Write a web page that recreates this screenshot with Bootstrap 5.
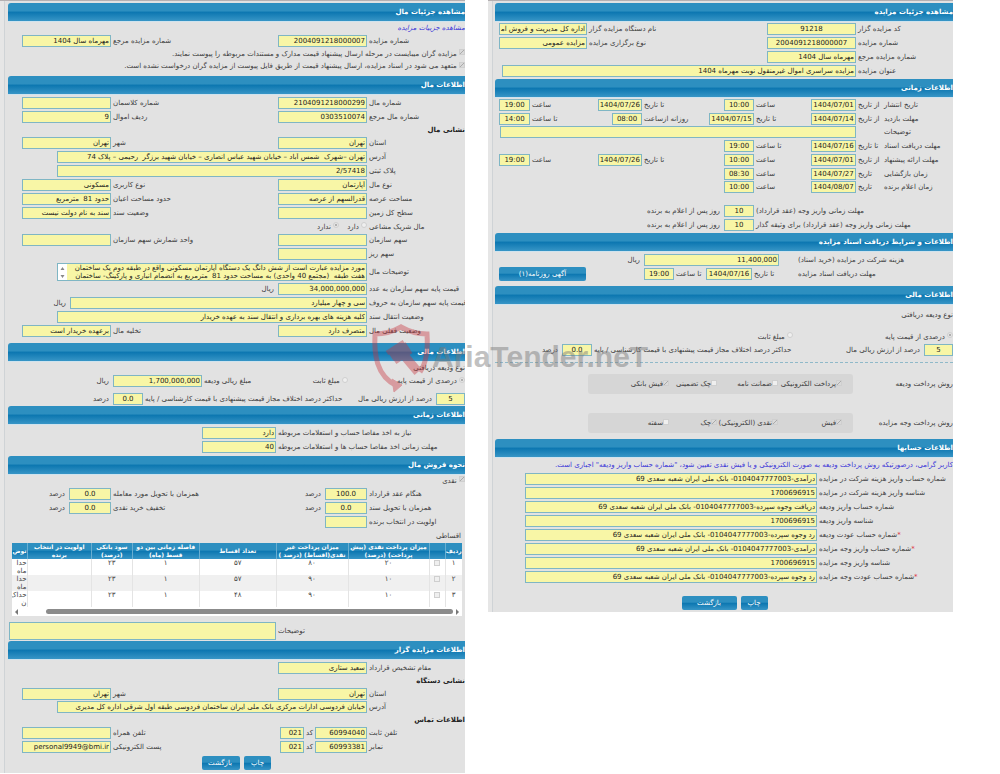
<!DOCTYPE html>
<html lang="fa">
<head>
<meta charset="utf-8">
<meta name="viewport" content="width=device-width, initial-scale=1">
<title>مشاهده جزئیات مزایده</title>
<link href="https://cdn.jsdelivr.net/npm/bootstrap@5.3.0/dist/css/bootstrap.min.css" rel="stylesheet">
<style>
  body { background: #fff; color: #3c3c3c; font: 7px/12px "DejaVu Sans", sans-serif; }
  .sheet { display: grid; grid-template-columns: 465fr 23fr 465fr 47fr; align-items: start; }
  .sheet > * { min-width: 0; }
  .pane { direction: rtl; overflow: hidden; border-top: 1px solid #b4b0b2; padding: 2px 0 1px;
    background: linear-gradient(90deg, #e6e6e6 4px, #cfd3d6 4px, #cfd3d6 5px, #e2e2e2 5px); }
  .pane.second { grid-column: 3; }
  .bar { height: 18px; margin: 0 0 0 8px; padding: 0; border-radius: 3px 0 0 0; color: #fff;
    font-size: 7px; font-weight: 700; line-height: 18px; box-shadow: 0 1px #cfe3ee;
    background: linear-gradient(#2d8fc0 0 45%, #0b76b0 50%, #3795c6); }
  .second .bar { margin-left: 7px; }
  .pad-a { padding: 1px 0; }
  .pad-b { padding: 2px 0; }
  .pad-c { padding: 2px 0 5px; }
  .ln { display: grid; align-items: center; height: 14px; white-space: nowrap; }
  .ln > * { min-width: 0; }
  .ln-13 { height: 13px; } .ln-12 { height: 12px; } .ln-21 { height: 21px; }
  .gap-top { margin-top: 10px; }
  .lab { display: flex; justify-content: flex-end; padding-left: 2px; }
  .unit { padding-right: 4px; }
  .fld.form-control { height: 12px; min-height: 0; padding: 0 1px; border: 1px solid #7fb6c4; border-radius: 0;
    background: #f8f6a6; color: #1c1c1c; font: 7px/10px "DejaVu Sans", sans-serif; }
  textarea.fld.form-control { height: 18px; line-height: 8px; resize: none; overflow: hidden; }
  .ctr.form-control { text-align: center; }
  .heavy { margin: 0; color: #222; font-size: 7px; font-weight: 700; line-height: 12px; }
  .note { color: #3a35d8; }
  .tick { appearance: none; width: 6px; height: 6px; margin: 0 0 3px; border: 1px solid #cfcfcf;
    background: #efefef; vertical-align: middle; flex: none; }
  .tick:checked { background: #d9d9d9 linear-gradient(135deg, transparent 45%, #aaa 45% 60%, transparent 60%); }
  .tick[type=radio] { border-radius: 50%; }
  .tick[type=radio]:checked { background: radial-gradient(#b0b0b0 35%, #e6e6e6 45%); }
  .acts { margin: 2px 0 0 8px; }
  .second .acts { margin-top: 12px; }
  .act.btn { height: 14px; padding: 0 8px; border: 0; border-radius: 2px; color: #fff; font-size: 7px; line-height: 14px;
    background: linear-gradient(#2d8fc0 0 45%, #0b76b0 50%, #3795c6); }
  .act.wide { width: 38px; } .act.wider { width: 55px; } .act.slim { width: 27px; padding: 0; }

  .g-pair { grid-template-columns: 98fr 89fr 167fr 89fr 22fr; }
  .g-long { grid-template-columns: 98fr 310fr 57fr; }
  .g-words { grid-template-columns: 98fr 297fr 70fr; }
  .g-kind { grid-template-columns: 117fr 60fr 86fr 89fr 113fr; }
  .g-share { grid-template-columns: 29fr 91fr 202fr 30fr 113fr; }
  .g-need { grid-template-columns: 189fr 74fr 202fr; }
  .g-cash { grid-template-columns: 98fr 42fr 100fr 114fr 42fr 69fr; }
  .g-memo { grid-template-columns: 189fr 267fr 9fr; }
  .g-phone { grid-template-columns: 98fr 52fr 11fr 24fr 169fr 89fr 22fr; }
  .g-head { grid-template-columns: 97fr 89fr 180fr 88fr 11fr; }
  .g-title { grid-template-columns: 97fr 354fr 14fr; }
  .g-date { grid-template-columns: 69fr 28fr 45fr 57fr 30fr 82fr 44fr 68fr 31fr 11fr; }
  .g-visit { grid-template-columns: 69fr 28fr 45fr 57fr 45fr 67fr 30fr 82fr 31fr 11fr; }
  .g-date > :first-child, .g-visit > :first-child, .g-remark > :first-child { justify-content: flex-end; padding-left: 0; }
  .g-remark { grid-template-columns: 69fr 28fr 356fr 12fr; }
  .g-pay { grid-template-columns: 199fr 30fr 236fr; }
  .g-fee { grid-template-columns: 157fr 17fr 135fr 156fr; }
  .g-docs { grid-template-columns: 157fr 44fr 46fr 32fr 30fr 58fr 87fr 11fr; }
  .g-kind2 { grid-template-columns: 160fr 305fr; }
  .g-share2 { grid-template-columns: 29fr 130fr 202fr 30fr 74fr; }
  .g-box { grid-template-columns: 100fr 265fr 100fr; height: 20px; }
  .g-acc { grid-template-columns: 136fr 292fr 37fr; }
  .choices { display: grid; grid-template-columns: 64fr 61fr 48fr 81fr; align-items: center; height: 20px;
    padding-right: 11px; border-radius: 3px; background: #d6d6d6; }
  .choices + .choices, .box-b { margin: 19px 0 6px; }
  .dash { border-top: 1px dashed #8fb9c9; margin: 6px 0 11px 7px; }

  .plan-wrap { margin: 1px 3px 4px 12px; overflow: hidden; background: #fff; }
  .plan { width: 100%; table-layout: fixed; border-collapse: collapse; line-height: 8px; color: #444; }
  .plan th { height: 16px; padding: 0; border-left: 1px solid #69aed1; color: #fff; font-size: 6px; text-align: center; vertical-align: middle;
    background: linear-gradient(#2d8fc0 0 45%, #0b76b0 50%, #3795c6); }
  .plan td { height: 16px; padding: 0; border-left: 1px solid #e4e4e4; text-align: center; vertical-align: top; overflow: hidden; }
  .plan tr:nth-child(even) td { background: #f0f0f0; }
  .plan .tick { display: block; margin: 1px auto 0; }
  .plan tr > :last-child { border: 0; white-space: nowrap; overflow: hidden; text-align: right; }
  .plan .c-no { width: 17px; } .plan .c-tick { width: 16px; } .plan .c-cash { width: 18%; } .plan .c-inst { width: 16%; }
  .plan .c-count { width: 17%; } .plan .c-gap { width: 15%; } .plan .c-rate { width: 9%; } .plan .c-more { width: 15px; }
  .scroller { display: flex; align-items: center; gap: 3px; height: 9px; padding: 0 3px; }
  .thumb { flex: 1; height: 5px; margin-left: 25px; border-radius: 3px; background: #8b8b8b; }
  .tri { border: 0 solid transparent; border-width: 3px 0; }
  .tri-r { border-left: 3px solid #777; }
  .tri-l { border-right: 3px solid #777; }
  .spin { left: 1px; top: 1px; width: 9px; height: 16px; background: #fff; }

  .mark-over { left: 37%; top: 324px; direction: ltr; pointer-events: none; }
  .mark-over svg { width: 62px; height: 70px; flex: none; }
  .mark-text { color: #777; opacity: .45; font: 700 30px/66px "Liberation Sans", sans-serif; }
</style>
</head>
<body>
<main class="sheet position-relative">
<form class="pane">
  <h2 class="bar">مشاهده جزئیات مال</h2>
  <div>
    <div class="ln"><a href="#" class="note fst-italic text-decoration-none">مشاهده جزییات مزایده</a></div>
    <div class="ln ln-12 g-pair"><label class="lab" for="a1">شماره مزایده</label><input id="a1" class="form-control fld" value="2004091218000007"><label class="lab" for="a2">شماره مزایده مرجع</label><input id="a2" class="form-control fld" value="مهرماه سال 1404"></div>
    <div class="ln ln-13"><label><input type="checkbox" class="tick" checked disabled> مزایده گران میبایست در مرحله ارسال پیشنهاد قیمت مدارک و مستندات مربوطه را پیوست نمایند.</label></div>
    <div class="ln ln-12"><label><input type="checkbox" class="tick" checked disabled> متعهد می شود در اسناد مزایده، ارسال پیشنهاد قیمت از طریق فایل پیوست از مزایده گران درخواست نشده است.</label></div>
  </div>
  <h2 class="bar mt-1">اطلاعات مال</h2>
  <div class="pad-c">
    <div class="ln g-pair"><label class="lab" for="b1">شماره مال</label><input id="b1" class="form-control fld" value="2104091218000299"><label class="lab" for="b2">شماره کلاسمان</label><input id="b2" class="form-control fld"></div>
    <div class="ln g-pair"><label class="lab" for="b3">شماره مال مرجع</label><input id="b3" class="form-control fld" value="0303510074"><label class="lab" for="b4">ردیف اموال</label><input id="b4" class="form-control fld" value="9"></div>
    <h3 class="heavy">نشانی مال</h3>
    <div class="ln g-pair"><label class="lab" for="b5">استان</label><input id="b5" class="form-control fld" value="تهران"><label class="lab" for="b6">شهر</label><input id="b6" class="form-control fld" value="تهران"></div>
    <div class="ln g-long"><label class="lab" for="b7">آدرس</label><input id="b7" class="form-control fld" value="تهران –شهرک  شمس آباد – خیابان شهید عباس انصاری – خیابان شهید برزگر  رحیمی – پلاک 74"></div>
    <div class="ln g-long"><label class="lab" for="b8">پلاک ثبتی</label><input id="b8" class="form-control fld" value="2/57418"></div>
    <div class="ln g-pair"><label class="lab" for="b9">نوع مال</label><input id="b9" class="form-control fld" value="آپارتمان"><label class="lab" for="b10">نوع کاربری</label><input id="b10" class="form-control fld" value="مسکونی"></div>
    <div class="ln g-pair"><label class="lab" for="b11">مساحت عرصه</label><input id="b11" class="form-control fld" value="قدرالسهم از عرصه"><label class="lab" for="b12">حدود مساحت اعیان</label><input id="b12" class="form-control fld" value="حدود 81  مترمربع"></div>
    <div class="ln g-pair"><label class="lab" for="b13">سطح کل زمین</label><input id="b13" class="form-control fld"><label class="lab" for="b14">وضعیت سند</label><input id="b14" class="form-control fld" value="سند به نام دولت نیست"></div>
    <div class="ln ln-13 g-long"><span class="lab">مال شریک مشاعی</span><div class="d-flex gap-2"><label><input type="radio" name="sh" class="tick" disabled> دارد</label><label><input type="radio" name="sh" class="tick" checked disabled> ندارد</label></div></div>
    <div class="ln g-pair"><label class="lab" for="b15">سهم سازمان</label><input id="b15" class="form-control fld"><label class="lab" for="b16">واحد شمارش سهم سازمان</label><input id="b16" class="form-control fld"></div>
    <div class="ln g-pair"><label class="lab" for="b17">سهم ریز</label><input id="b17" class="form-control fld"></div>
    <div class="ln ln-21 g-long"><label class="lab" for="b18">توضیحات مال</label><div class="position-relative"><textarea id="b18" class="form-control fld">مورد مزایده عبارت است از شش دانگ یک دستگاه آپارتمان مسکونی واقع در طبقه دوم یک ساختمان
هفت طبقه  (مجتمع 40 واحدی) به مساحت حدود 81  مترمربع به انضمام انباری و پارکینگ- ساختمان</textarea><svg class="spin position-absolute" viewBox="0 0 9 16"><path d="M2.5 6 4.5 3 6.5 6ZM2.5 11 4.5 14 6.5 11Z" fill="#888"/></svg></div></div>
    <div class="ln g-pair"><label class="lab" for="b19">قیمت پایه سهم سازمان به عدد</label><input id="b19" class="form-control fld" value="34,000,000,000"><span class="unit">ریال</span></div>
    <div class="ln g-words"><label class="lab" for="b20">قیمت پایه سهم سازمان به حروف</label><input id="b20" class="form-control fld" value="سی و چهار میلیارد"><span class="unit">ریال</span></div>
    <div class="ln g-long"><label class="lab" for="b21">وضعیت انتقال سند</label><input id="b21" class="form-control fld" value="کلیه هزینه های بهره برداری و انتقال سند به عهده خریدار"></div>
    <div class="ln g-pair"><label class="lab" for="b22">وضعیت فعلی مال</label><input id="b22" class="form-control fld" value="متصرف دارد"><label class="lab" for="b23">تخلیه مال</label><input id="b23" class="form-control fld" value="برعهده خریدار است"></div>
  </div>
  <h2 class="bar">اطلاعات مالی</h2>
  <div>
    <div class="ln ln-13">نوع ودیعه دریافتی</div>
    <div class="ln g-kind"><label><input type="radio" name="dk" class="tick" checked disabled> درصدی از قیمت پایه</label><label><input type="radio" name="dk" class="tick" disabled> مبلغ ثابت</label><label class="lab" for="c1">مبلغ ریالی ودیعه</label><input id="c1" class="form-control fld" value="1,700,000,000"><span class="unit">ریال</span></div>
    <div class="ln g-share mt-1"><input id="c2" class="form-control fld ctr" value="5"><label class="unit" for="c2">درصد از ارزش ریالی مال</label><label class="lab" for="c3">حداکثر درصد اختلاف مجاز قیمت پیشنهادی با قیمت کارشناسی / پایه</label><input id="c3" class="form-control fld ctr" value="0.0"><span class="unit">درصد</span></div>
  </div>
  <h2 class="bar">اطلاعات زمانی</h2>
  <div class="pad-b">
    <div class="ln g-need"><label class="lab" for="d1">نیاز به اخذ مفاصا حساب و استعلامات مربوطه</label><input id="d1" class="form-control fld" value="دارد"></div>
    <div class="ln g-need"><label class="lab" for="d2">مهلت زمانی اخذ مفاصا حساب ها و استعلامات مربوطه</label><input id="d2" class="form-control fld" value="40"></div>
  </div>
  <h2 class="bar">نحوه فروش مال</h2>
  <div>
    <div class="ln ln-13"><label><input type="checkbox" class="tick" checked disabled> نقدی</label></div>
    <div class="ln g-cash"><label class="lab" for="e1">هنگام عقد قرارداد</label><input id="e1" class="form-control fld ctr" value="100.0"><span class="unit">درصد</span><label class="lab" for="e2">همزمان با تحویل مورد معامله</label><input id="e2" class="form-control fld ctr" value="0.0"><span class="unit">درصد</span></div>
    <div class="ln g-cash"><label class="lab" for="e3">همزمان با تحویل سند</label><input id="e3" class="form-control fld ctr" value="0.0"><span class="unit">درصد</span><label class="lab" for="e4">تخفیف خرید نقدی</label><input id="e4" class="form-control fld ctr" value="0.0"><span class="unit">درصد</span></div>
    <div class="ln g-cash"><label class="lab" for="e5">اولویت در انتخاب برنده</label><input id="e5" class="form-control fld"></div>
    <div class="ln ln-13 pe-1">اقساطی</div>
    <div class="plan-wrap">
      <table class="plan">
        <thead><tr><th class="c-no">ردیف</th><th class="c-tick"></th><th class="c-cash">میزان پرداخت نقدی (پیش پرداخت) (درصد)</th><th class="c-inst">میزان پرداخت غیر نقدی(اقساط) (درصد )</th><th class="c-count">تعداد اقساط</th><th class="c-gap">فاصله زمانی بین دو قسط (ماه)</th><th class="c-rate">سود بانکی (درصد)</th><th>اولویت در انتخاب برنده</th><th class="c-more">توض</th></tr></thead>
        <tbody>
          <tr><td>۱</td><td><input type="checkbox" class="tick" aria-label="۱" disabled></td><td>۲۰</td><td>۸۰</td><td>۵۷</td><td>۱</td><td>۲۳</td><td></td><td>حدا<br>ماه</td></tr>
          <tr><td>۲</td><td><input type="checkbox" class="tick" aria-label="۲" disabled></td><td>۱۰</td><td>۹۰</td><td>۵۷</td><td>۱</td><td>۲۳</td><td></td><td>حدا<br>ماه</td></tr>
          <tr><td>۳</td><td><input type="checkbox" class="tick" aria-label="۳" disabled></td><td>۱۰</td><td>۹۰</td><td>۴۸</td><td>۱</td><td>۲۳</td><td></td><td>حداک<br>ن</td></tr>
        </tbody>
      </table>
      <div class="scroller"><i class="tri tri-r"></i><div class="thumb"></div><i class="tri tri-l"></i></div>
    </div>
    <div class="ln ln-21 g-memo"><label class="lab" for="e6">توضیحات</label><textarea id="e6" class="form-control fld"></textarea></div>
  </div>
  <h2 class="bar">اطلاعات مزایده گزار</h2>
  <div class="pad-b">
    <div class="ln g-pair"><label class="lab" for="f1">مقام تشخیص قرارداد</label><input id="f1" class="form-control fld" value="سعید ستاری"></div>
    <h3 class="heavy">نشانی دستگاه</h3>
    <div class="ln ln-13 g-pair"><label class="lab" for="f2">استان</label><input id="f2" class="form-control fld" value="تهران"><label class="lab" for="f3">شهر</label><input id="f3" class="form-control fld" value="تهران"></div>
    <div class="ln g-long"><label class="lab" for="f4">آدرس</label><input id="f4" class="form-control fld" value="خیابان فردوسی ادارات مرکزی بانک ملی ایران ساختمان فردوسی طبقه اول شرقی اداره کل مدیری"></div>
    <h3 class="heavy">اطلاعات تماس</h3>
    <div class="ln g-phone"><label class="lab" for="f5">تلفن ثابت</label><input id="f5" class="form-control fld" value="60994040"><label class="lab" for="f6">کد</label><input id="f6" class="form-control fld" value="021"><label class="lab" for="f7">تلفن همراه</label><input id="f7" class="form-control fld"></div>
    <div class="ln g-phone"><label class="lab" for="f8">نمابر</label><input id="f8" class="form-control fld" value="60993381"><label class="lab" for="f9">کد</label><input id="f9" class="form-control fld" value="021"><label class="lab" for="f10">پست الکترونیکی</label><input id="f10" class="form-control fld" value="personal9949@bmi.ir"></div>
    <div class="d-flex justify-content-center gap-1 acts"><button type="button" class="btn act slim">چاپ</button><button type="button" class="btn act wide">بازگشت</button></div>
  </div>
</form>

<form class="pane second">
  <h2 class="bar">مشاهده جزئیات مزایده</h2>
  <div class="pad-a">
    <div class="ln g-head"><label class="lab" for="h1">کد مزایده گزار</label><input id="h1" class="form-control fld ctr" value="91218"><label class="lab" for="h2">نام دستگاه مزایده گزار</label><input id="h2" class="form-control fld" value="اداره کل مدیریت و فروش اموال"></div>
    <div class="ln g-head"><label class="lab" for="h3">شماره مزایده</label><input id="h3" class="form-control fld ctr" value="2004091218000007"><label class="lab" for="h4">نوع برگزاری مزایده</label><input id="h4" class="form-control fld" value="مزایده عمومی"></div>
    <div class="ln g-head"><label class="lab" for="h5">شماره مزایده مرجع</label><input id="h5" class="form-control fld" value="مهرماه سال 1404"></div>
    <div class="ln g-title"><label class="lab" for="h6">عنوان مزایده</label><input id="h6" class="form-control fld" value="مزایده سراسری اموال غیرمنقول نوبت مهرماه 1404"></div>
  </div>
  <h2 class="bar">اطلاعات زمانی</h2>
  <div class="pad-a">
    <div class="ln g-date"><span class="lab">تاریخ انتشار</span><label class="lab" for="i1">از تاریخ</label><input id="i1" class="form-control fld ctr" value="1404/07/01"><label class="lab" for="i2">ساعت</label><input id="i2" class="form-control fld ctr" value="10:00"><label class="lab" for="i3">تا تاریخ</label><input id="i3" class="form-control fld ctr" value="1404/07/26"><label class="lab" for="i4">ساعت</label><input id="i4" class="form-control fld ctr" value="19:00"></div>
    <div class="ln ln-13 g-visit"><span class="lab">مهلت بازدید</span><label class="lab" for="i5">از تاریخ</label><input id="i5" class="form-control fld ctr" value="1404/07/14"><label class="lab" for="i6">تا تاریخ</label><input id="i6" class="form-control fld ctr" value="1404/07/15"><label class="lab" for="i7">روزانه ازساعت</label><input id="i7" class="form-control fld ctr" value="08:00"><label class="lab" for="i8">تا ساعت</label><input id="i8" class="form-control fld ctr" value="14:00"></div>
    <div class="ln g-remark"><label class="lab" for="i9">توضیحات</label><span></span><input id="i9" class="form-control fld"></div>
    <div class="ln g-date"><span class="lab">مهلت دریافت اسناد</span><label class="lab" for="i10">تا تاریخ</label><input id="i10" class="form-control fld ctr" value="1404/07/16"><label class="lab" for="i11">تا ساعت</label><input id="i11" class="form-control fld ctr" value="19:00"></div>
    <div class="ln g-date"><span class="lab">مهلت ارائه پیشنهاد</span><label class="lab" for="i12">از تاریخ</label><input id="i12" class="form-control fld ctr" value="1404/07/01"><label class="lab" for="i13">ساعت</label><input id="i13" class="form-control fld ctr" value="10:00"><label class="lab" for="i14">تا تاریخ</label><input id="i14" class="form-control fld ctr" value="1404/07/26"><label class="lab" for="i15">ساعت</label><input id="i15" class="form-control fld ctr" value="19:00"></div>
    <div class="ln ln-13 g-date"><span class="lab">زمان بازگشایی</span><label class="lab" for="i16">تاریخ</label><input id="i16" class="form-control fld ctr" value="1404/07/27"><label class="lab" for="i17">ساعت</label><input id="i17" class="form-control fld ctr" value="08:30"></div>
    <div class="ln g-date"><span class="lab">زمان اعلام برنده</span><label class="lab" for="i18">تاریخ</label><input id="i18" class="form-control fld ctr" value="1404/08/07"><label class="lab" for="i19">ساعت</label><input id="i19" class="form-control fld ctr" value="10:00"></div>
    <div class="ln g-pay gap-top"><label class="lab" for="i20">مهلت زمانی واریز وجه (عقد قرارداد)</label><input id="i20" class="form-control fld ctr" value="10"><span class="unit">روز پس از اعلام به برنده</span></div>
    <div class="ln g-pay"><label class="lab" for="i21">مهلت زمانی واریز وجه (عقد قرارداد) برای وثیقه گذار</label><input id="i21" class="form-control fld ctr" value="10"><span class="unit">روز پس از اعلام به برنده</span></div>
  </div>
  <h2 class="bar">اطلاعات و شرایط دریافت اسناد مزایده</h2>
  <div class="pad-c">
    <div class="ln g-fee"><label class="lab" for="j1">هزینه شرکت در مزایده (خرید اسناد)</label><span></span><input id="j1" class="form-control fld" value="11,400,000"><span class="unit">ریال</span></div>
    <div class="ln g-docs"><span class="lab">مهلت دریافت اسناد مزایده</span><label class="lab" for="j2">تا تاریخ</label><input id="j2" class="form-control fld ctr" value="1404/07/16"><label class="lab" for="j3">تا ساعت</label><input id="j3" class="form-control fld ctr" value="19:00"><span></span><button type="button" class="btn act">آگهی روزنامه(۱)</button></div>
  </div>
  <h2 class="bar">اطلاعات مالی</h2>
  <div>
    <div class="ln mt-1">نوع ودیعه دریافتی</div>
    <div class="ln ln-13 g-kind2 mt-2"><label><input type="radio" name="dk2" class="tick" checked disabled> درصدی از قیمت پایه</label><label><input type="radio" name="dk2" class="tick" disabled> مبلغ ثابت</label></div>
    <div class="ln ln-13 g-share2"><input id="k1" class="form-control fld ctr" value="5"><label class="unit" for="k1">درصد از ارزش ریالی مال</label><label class="lab" for="k2">حداکثر درصد اختلاف مجاز قیمت پیشنهادی با قیمت کارشناسی / پایه</label><input id="k2" class="form-control fld ctr" value="0.0"><span class="unit">درصد</span></div>
    <div class="dash"></div>
    <div class="ln g-box"><span>روش پرداخت ودیعه</span><div class="choices"><label><input type="checkbox" class="tick" checked disabled>پرداخت الکترونیکی</label><label><input type="checkbox" class="tick" disabled>ضمانت نامه</label><label><input type="checkbox" class="tick" disabled>چک تضمینی</label><label><input type="checkbox" class="tick" checked disabled>فیش بانکی</label></div></div>
    <div class="ln g-box box-b"><span>روش پرداخت وجه مزایده</span><div class="choices"><label><input type="checkbox" class="tick" checked disabled>فیش</label><label><input type="checkbox" class="tick" checked disabled>نقدی (الکترونیکی)</label><label><input type="checkbox" class="tick" checked disabled>چک</label><label><input type="checkbox" class="tick" disabled>سفته</label></div></div>
  </div>
  <h2 class="bar">اطلاعات حسابها</h2>
  <div class="pad-a">
    <div class="ln note">کاربر گرامی، درصورتیکه روش پرداخت ودیعه به صورت الکترونیکی و یا فیش نقدی تعیین شود، "شماره حساب واریز ودیعه" اجباری است.</div>
    <div class="ln g-acc"><label class="lab" for="l1">شماره حساب واریز هزینه شرکت در مزایده</label><input id="l1" class="form-control fld" value="درآمدی-0104047777003- بانک ملی ایران شعبه سعدی 69"></div>
    <div class="ln g-acc"><label class="lab" for="l2">شناسه واریز هزینه شرکت در مزایده</label><input id="l2" class="form-control fld" value="1700696915"></div>
    <div class="ln g-acc"><label class="lab" for="l3">شماره حساب واریز ودیعه</label><input id="l3" class="form-control fld" value="دریافت وجوه سپرده-0104047777003- بانک ملی ایران شعبه سعدی 69"></div>
    <div class="ln g-acc"><label class="lab" for="l4">شناسه واریز ودیعه</label><input id="l4" class="form-control fld" value="1700696915"></div>
    <div class="ln g-acc"><label class="lab" for="l5"><span class="text-danger">*</span>شماره حساب عودت ودیعه</label><input id="l5" class="form-control fld" value="رد وجوه سپرده-0104047777003- بانک ملی ایران شعبه سعدی 69"></div>
    <div class="ln g-acc"><label class="lab" for="l6"><span class="text-danger">*</span>شماره حساب واریز وجه مزایده</label><input id="l6" class="form-control fld" value="درآمدی-0104047777003- بانک ملی ایران شعبه سعدی 69"></div>
    <div class="ln g-acc"><label class="lab" for="l7">شناسه واریز وجه مزایده</label><input id="l7" class="form-control fld" value="1700696915"></div>
    <div class="ln g-acc"><label class="lab" for="l8"><span class="text-danger">*</span>شماره حساب عودت وجه مزایده</label><input id="l8" class="form-control fld" value="رد وجوه سپرده-0104047777003- بانک ملی ایران شعبه سعدی 69"></div>
    <div class="d-flex justify-content-center gap-1 acts"><button type="button" class="btn act slim">چاپ</button><button type="button" class="btn act wider">بازگشت</button></div>
  </div>
</form>

<div class="mark-over position-absolute d-flex">
  <svg viewBox="0 0 62 70" fill="none" stroke="#c8323c" opacity=".4"><path d="M50 48C57 38 58 25 57 10 45 10 38 7 31 3 24 7 15 10 5 10 4 30 6 52 27 62" stroke-width="5"/><path d="M22 55 32 61 24 68Z" fill="#c8323c"/><path d="M17 29 34 18M25 38 41 27" stroke-width="5"/><path d="M21 33 38 22M32 29 48 48" stroke-width="9"/></svg>
  <span class="mark-text">AriaTender.neT</span>
</div>
</main>
<script src="https://cdn.jsdelivr.net/npm/bootstrap@5.3.0/dist/js/bootstrap.bundle.min.js"></script>
</body>
</html>
